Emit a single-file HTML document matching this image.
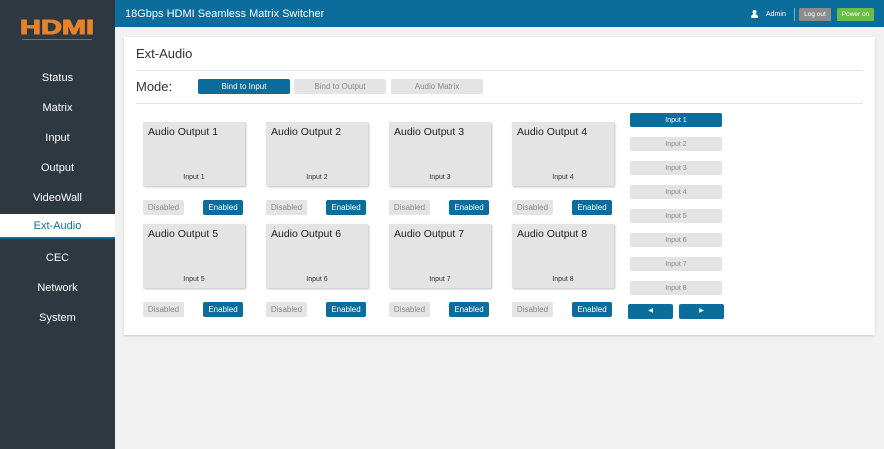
<!DOCTYPE html>
<html><head><style>
*{margin:0;padding:0;box-sizing:border-box}
body{width:884px;height:449px;background:#f1f1f1;font-family:"Liberation Sans",sans-serif;position:relative;overflow:hidden}
.abs{position:absolute}
#side{left:0;top:0;width:115px;height:449px;background:#2e3841}
.nav{position:absolute;left:0;width:115px;text-align:center;color:#fff;font-size:11px}
#hdr{left:115px;top:0;width:769px;height:27px;background:#0b6d9c;color:#fff}
#card{left:124px;top:37px;width:751px;height:298px;background:#fff;box-shadow:0 1px 2px rgba(0,0,0,.15)}
.btn{position:absolute;height:15px;font-size:8px;text-align:center;line-height:15px;border-radius:2px}
.b{background:#0b6d9c;color:#fff}
.g{background:#e4e4e4;color:#888}
.box{position:absolute;width:102px;height:64px;background:#e4e4e4;box-shadow:1px 1px 2px rgba(0,0,0,.25)}
.box .t{position:absolute;left:5px;top:4px;font-size:10.5px;color:#222}
.box .s{position:absolute;left:0;right:0;bottom:5px;text-align:center;font-size:7px;color:#333}
</style></head><body>
<div id="side" class="abs">
<div class="abs" style="left:20px;top:17px;color:#e8822a;font-weight:900;font-size:20px;letter-spacing:0px;transform:scaleX(1.45);transform-origin:left;-webkit-text-stroke:1px #e8822a">HDMI</div>
<div class="abs" style="left:22px;top:39px;width:70px;height:1px;background:#8a6a4a"></div>
<div class="nav" style="top:72px">Status</div>
<div class="nav" style="top:102px">Matrix</div>
<div class="nav" style="top:132px">Input</div>
<div class="nav" style="top:162px">Output</div>
<div class="nav" style="top:192px">VideoWall</div>
<div class="nav" style="top:214px;height:25px;line-height:24px;background:#fff;color:#1a6f9a;border-bottom:2px solid #0b6d9c">Ext-Audio</div>
<div class="nav" style="top:252px">CEC</div>
<div class="nav" style="top:282px">Network</div>
<div class="nav" style="top:312px">System</div>
</div>
<div id="hdr" class="abs">
<div class="abs" style="left:10px;top:8px;font-size:11px">18Gbps HDMI Seamless Matrix Switcher</div>
<svg class="abs" style="left:636px;top:10px" width="7" height="8" viewBox="0 0 7 8"><circle cx="3.5" cy="2" r="2" fill="#fff"/><path d="M0 8 Q0 4 3.5 4 Q7 4 7 8Z" fill="#fff"/></svg>
<div class="abs" style="left:651px;top:11px;font-size:7px">Admin</div>
<div class="abs" style="left:679px;top:8px;width:1px;height:13px;background:#7fb0ca"></div>
<div class="btn" style="left:684px;top:8px;width:32px;height:13px;line-height:13px;background:#8c8c8c;color:#fff;font-size:6.5px;border-radius:1px">Log out</div>
<div class="btn" style="left:722px;top:8px;width:37px;height:13px;line-height:13px;background:#6cbd45;color:#fff;font-size:6.5px;border-radius:1px">Power on</div>
</div>
<div id="card" class="abs">
<div class="abs" style="left:12px;top:9px;font-size:13px;color:#333">Ext-Audio</div>
<div class="abs" style="left:12px;top:33px;width:727px;height:1px;background:#e4e4e4"></div>
<div class="abs" style="left:12px;top:42px;font-size:13px;color:#333">Mode:</div>
<div class="btn b" style="left:74px;top:42px;width:92px">Bind to Input</div>
<div class="btn g" style="left:170px;top:42px;width:92px">Bind to Output</div>
<div class="btn g" style="left:267px;top:42px;width:92px">Audio Matrix</div>
<div class="abs" style="left:12px;top:66px;width:727px;height:1px;background:#e4e4e4"></div>
</div>
<div id="boxes"></div>
<script>
var h='';var xs=[143,266,389,512];
for(var r=0;r<2;r++)for(var c=0;c<4;c++){var n=r*4+c+1,x=xs[c],y=122+r*102;
h+='<div class="box" style="left:'+x+'px;top:'+y+'px"><div class="t">Audio Output '+n+'</div><div class="s">Input '+n+'</div></div>';
h+='<div class="btn g" style="left:'+x+'px;top:'+(y+78)+'px;width:41px">Disabled</div>';
h+='<div class="btn b" style="left:'+(x+60)+'px;top:'+(y+78)+'px;width:40px">Enabled</div>';}
for(var i=0;i<8;i++)h+='<div class="btn '+(i?'g':'b')+'" style="left:630px;top:'+(113+i*24)+'px;width:92px;height:14px;line-height:15px;font-size:7px">Input '+(i+1)+'</div>';
h+='<div class="btn b" style="left:628px;top:304px;width:45px;font-size:6px">&#9664;</div>';
h+='<div class="btn b" style="left:679px;top:304px;width:45px;font-size:6px">&#9654;</div>';
document.getElementById('boxes').innerHTML=h;
</script>
</body></html>
